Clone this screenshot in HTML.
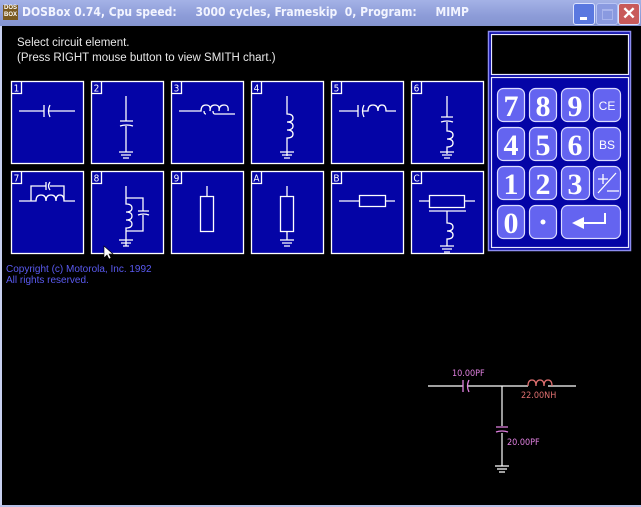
<!DOCTYPE html>
<html><head><meta charset="utf-8"><style>
html,body{margin:0;padding:0;width:641px;height:507px;overflow:hidden;background:#000}
#t{position:absolute;left:0;top:0;width:641px;height:26px;background:linear-gradient(#a4b2e6,#8d9cd8 60%,#8494d0);}
#t span{position:absolute;left:22px;top:5px;font:bold 12px "DejaVu Sans Condensed","Liberation Sans",sans-serif;color:#f2f4ff;white-space:pre}
.ic{position:absolute;left:3px;top:5px;width:15px;height:15px;background:#7a5a20;color:#fff;font:bold 6px "Liberation Sans";line-height:7px;text-align:center}
.b{position:absolute;top:3px;width:20px;height:20px;border-radius:3px;border:1px solid #dde4ff}
svg{position:absolute;left:0;top:0}
</style></head><body>
<div id="t"><div class="ic">DOS<br>BOX</div><span>DOSBox 0.74, Cpu speed:     3000 cycles, Frameskip  0, Program:     MIMP</span>
<div class="b" style="left:573px;background:#5a78e0"><div style="position:absolute;left:6px;top:13px;width:7px;height:3px;background:#fff"></div></div>
<div class="b" style="left:596px;background:#8a9ae0;border-color:#b8c4f4"><div style="position:absolute;left:5px;top:5px;width:9px;height:8px;border:1px solid #a8b4ec;border-top-width:2px"></div></div>
<div class="b" style="left:618px;background:#c85a5a;color:#fff;font:bold 17px 'Liberation Sans';text-align:center;line-height:20px">✕</div>
</div>
<svg width="641" height="507" viewBox="0 0 641 507" font-family="Liberation Sans, sans-serif">
<rect x="0" y="26" width="2" height="481" fill="#c8d0f0"/>
<rect x="0" y="505" width="641" height="2" fill="#b8c0e8"/>
<text x="17" y="46" fill="#e8e8e8" font-size="11.5">Select circuit element.</text>
<text x="17" y="61" fill="#e8e8e8" font-size="11.5">(Press RIGHT mouse button to view SMITH chart.)</text>
<text x="6" y="272" fill="#5a5af0" font-size="10">Copyright (c) Motorola, Inc. 1992</text>
<text x="6" y="283" fill="#5a5af0" font-size="10">All rights reserved.</text>
<g stroke="#fff" stroke-width="1.3">
<g fill="#0404a6">
<rect x="11.5" y="81.5" width="72" height="82"/><rect x="91.5" y="81.5" width="72" height="82"/><rect x="171.5" y="81.5" width="72" height="82"/><rect x="251.5" y="81.5" width="72" height="82"/><rect x="331.5" y="81.5" width="72" height="82"/><rect x="411.5" y="81.5" width="72" height="82"/>
<rect x="11.5" y="171.5" width="72" height="82"/><rect x="91.5" y="171.5" width="72" height="82"/><rect x="171.5" y="171.5" width="72" height="82"/><rect x="251.5" y="171.5" width="72" height="82"/><rect x="331.5" y="171.5" width="72" height="82"/><rect x="411.5" y="171.5" width="72" height="82"/>
</g>
<g fill="none">
<path d="M11.5 93.5h10v-12M91.5 93.5h10v-12M171.5 93.5h10v-12M251.5 93.5h10v-12M331.5 93.5h10v-12M411.5 93.5h10v-12M11.5 183.5h10v-12M91.5 183.5h10v-12M171.5 183.5h10v-12M251.5 183.5h10v-12M331.5 183.5h10v-12M411.5 183.5h10v-12"/>
<path d="M19 111h25M44 105v12M50 105q-3 6 0 12M48 111h27"/>
<path d="M126 96v25M120 121h13M120 126q6.5-2 13 0M126 126v26M119 152h14M121 155h10M123 158h6"/>
<path d="M179 111h22q0-6 5-6t4 6q0-6 5-6t4 6q0-6 5-6t4 6M204 111q0 3 2 3M213 111q0 3 2 3h20"/>
<path d="M287 96v18q6 0 6 4t-6 4q6 0 6 4t-6 4q6 0 6 4t-6 4v18M280 152h14M282 155h10M284 158h6"/>
<path d="M339 111h19M358 105v12M364 105q-3 6 0 12M362 111h6q0-6 5-6t5 6q0-6 4-6t4 6h10"/>
<path d="M447 96v21M441 117h12M441 122q6-2 12 0M447 122v9q6 0 6 4t-6 4q6 0 6 4t-6 4v7M440 152h14M442 155h10M444 158h6"/>
<path d="M19 201h12v-15h15M46 182v8M50 182q-3 4 0 8M50 186h14v15h11M31 201h5q0-6 5-6t5 6q0-6 5-6t5 6q0-6 4-6t4 6h4"/>
<path d="M126 186v18q6 0 6 4t-6 4q6 0 6 4t-6 4q6 0 6 4t-6 4v18M126 198h17v13M138 211h11M138 215q5.5-2 11 0M143 215v16h-17M119 240h14M121 243h10M123 246h6"/>
<path d="M207 186v10M200.5 196.5h13v35h-13z"/>
<path d="M287 186v10M280.5 196.5h13v35h-13zM287 232v8M280 240h14M282 243h10M284 246h6"/>
<path d="M339 201h20M359.5 195.5h26v11h-26zM386 201h9"/>
<path d="M419 201h10M429.5 195.5h35v12h-35zM465 201h10M429 211h37M447 211v12q6 0 6 4t-6 4q6 0 6 4t-6 4v7M440 246h14M442 249h10M444 252h6"/>
</g></g>
<g fill="#fff" font-size="10" font-family="DejaVu Sans Condensed, Liberation Sans, sans-serif" text-anchor="middle">
<text x="16.5" y="91.5">1</text><text x="96.5" y="91.5">2</text><text x="176.5" y="91.5">3</text><text x="256.5" y="91.5">4</text><text x="336.5" y="91.5">5</text><text x="416.5" y="91.5">6</text>
<text x="16.5" y="181.5">7</text><text x="96.5" y="181.5">8</text><text x="176.5" y="181.5">9</text><text x="256.5" y="181.5">A</text><text x="336.5" y="181.5">B</text><text x="416.5" y="181.5">C</text>
</g>
<rect x="488.5" y="31.5" width="142" height="219" fill="#0404a6" stroke="#8c8cf0" stroke-width="1.5"/>
<rect x="491.5" y="34.5" width="137" height="40" fill="#000" stroke="#e8e8ff" stroke-width="1.2"/>
<rect x="491.5" y="77.5" width="137" height="170" fill="#0404a6" stroke="#e8e8ff" stroke-width="1.2"/>
<g fill="#6464f0" stroke="#dcdcff" stroke-width="1.2">
<rect x="497.5" y="88.5" width="27" height="33" rx="6"/><rect x="529.5" y="88.5" width="27" height="33" rx="6"/><rect x="561.5" y="88.5" width="28" height="33" rx="6"/><rect x="593.5" y="88.5" width="27" height="33" rx="6"/>
<rect x="497.5" y="127.5" width="27" height="33" rx="6"/><rect x="529.5" y="127.5" width="27" height="33" rx="6"/><rect x="561.5" y="127.5" width="28" height="33" rx="6"/><rect x="593.5" y="127.5" width="27" height="33" rx="6"/>
<rect x="497.5" y="166.5" width="27" height="33" rx="6"/><rect x="529.5" y="166.5" width="27" height="33" rx="6"/><rect x="561.5" y="166.5" width="28" height="33" rx="6"/><rect x="593.5" y="166.5" width="27" height="33" rx="6"/>
<rect x="497.5" y="205.5" width="27" height="33" rx="6"/><rect x="529.5" y="205.5" width="27" height="33" rx="6"/><rect x="561.5" y="205.5" width="59" height="33" rx="6"/>
</g>
<g fill="#fff" font-family="Liberation Serif, serif" font-weight="bold" font-size="30" text-anchor="middle">
<text x="511" y="116">7</text><text x="543" y="116">8</text><text x="575" y="116">9</text>
<text x="511" y="155">4</text><text x="543" y="155">5</text><text x="575" y="155">6</text>
<text x="511" y="194">1</text><text x="543" y="194">2</text><text x="575" y="194">3</text>
<text x="511" y="233">0</text>
</g>
<g fill="#fff" font-size="12" text-anchor="middle"><text x="607" y="110">CE</text><text x="607" y="149">BS</text></g>
<circle cx="543" cy="222" r="2.5" fill="#fff"/>
<path d="M598 193l18-20M598 179h10M603 174v10M607 191h12" stroke="#fff" stroke-width="1.3" fill="none"/>
<path d="M605 213v10h-22" stroke="#fff" stroke-width="2" fill="none"/><path d="M572 223l12-6v12z" fill="#fff"/>
<g stroke="#fff" stroke-width="1.2" fill="none">
<path d="M428 386h35M468 386h60M548 386h28M502 386v40M502 433v33M495 466h14M497 469h10M499 472h6"/>
</g>
<g stroke="#e080e0" stroke-width="1.3" fill="none"><path d="M463 380v12M469 380q-3 6 0 12M496 427h12M496 432q6-2 12 0"/></g>
<path d="M528 386q0-6 4-6t4 6q0-6 4-6t4 6q0-6 4-6t4 6" stroke="#e07070" stroke-width="1.3" fill="none"/>
<g font-size="9" font-family="DejaVu Sans Condensed, Liberation Sans, sans-serif">
<text x="452" y="376" fill="#e080e0">10.00PF</text>
<text x="521" y="398" fill="#e07070">22.00NH</text>
<text x="507" y="445" fill="#e080e0">20.00PF</text>
</g>
<path d="M104 246v12l3-3 2 4 2-1-2-4h4z" fill="#fff" stroke="#000" stroke-width="0.6"/>
</svg>
</body></html>
